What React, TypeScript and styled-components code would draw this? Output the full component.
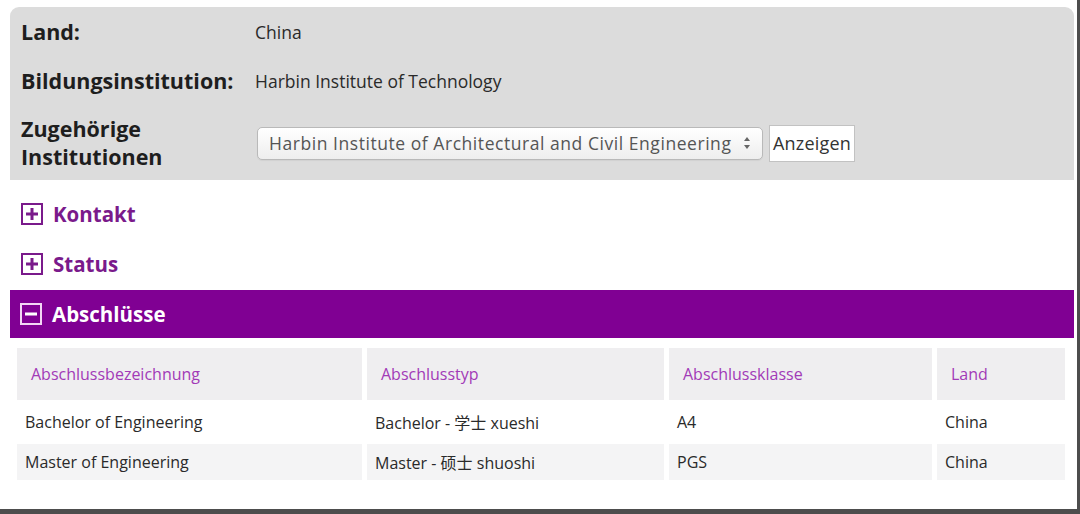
import React from "react";
import styled, { createGlobalStyle } from "styled-components";

const Global = createGlobalStyle`
  html, body { margin: 0; padding: 0; background: #fff; }
  body { font-family: "Open Sans", "Noto Sans CJK SC", sans-serif; }
  * { box-sizing: border-box; }
`;

const Frame = styled.div`
  width: 1080px;
  height: 514px;
  border-right: 3px solid #4d4d4d;
  border-bottom: 5px solid #4d4d4d;
  padding: 7px 3px 0 10px;
  overflow: hidden;
`;

const InfoPanel = styled.section`
  background: #dcdcdc;
  border-radius: 9px 9px 0 0;
  height: 173px;
  display: grid;
  grid-template-columns: 234px 1fr;
  grid-template-rows: 49px 50px 1fr;
  align-items: center;
  padding-left: 11px;
`;

const Label = styled.div`
  font-weight: 700;
  font-size: 21.5px;
  line-height: 28px;
  color: #1e1e1e;
`;

const Value = styled.div`
  font-size: 17.5px;
  color: #2a2a2a;
  display: flex;
  align-items: center;
  gap: 6px;
`;

const SelectBox = styled.div`
  width: 506px;
  height: 33px;
  margin-left: 2px;
  border: 1px solid #b9b9b9;
  border-radius: 5px;
  background: linear-gradient(#ffffff, #eeeeee);
  display: flex;
  align-items: center;
  justify-content: space-between;
  padding: 0 11px 0 11px;
  font-size: 17.5px;
  letter-spacing: 0.55px;
  color: #555;
  box-shadow: 0 1px 1px rgba(0,0,0,0.05);
`;

const Button = styled.button`
  height: 37px;
  padding: 0 3px;
  background: #fff;
  border: 1px solid #c2c2c2;
  font-family: inherit;
  font-size: 18px;
  letter-spacing: 0.2px;
  color: #333;
`;

const SectionHead = styled.div<{ $open?: boolean }>`
  height: 48px;
  margin-top: 2px;
  display: flex;
  align-items: center;
  gap: 10px;
  padding-left: ${p => (p.$open ? "10px" : "11px")};
  background: ${p => (p.$open ? "#800093" : "transparent")};
  color: ${p => (p.$open ? "#fff" : "#7a1a8b")};
  font-weight: 700;
  font-size: 20.5px;
  &:first-of-type { margin-top: 10px; }
`;

const Toggle = styled.span<{ $open?: boolean }>`
  width: 22px;
  height: 22px;
  border: 2px solid ${p => (p.$open ? "#f3d6f5" : "#7a1a8b")};
  display: inline-flex;
  align-items: center;
  justify-content: center;
`;

const Sections = styled.div`
  display: flex;
  flex-direction: column;
`;

const Table = styled.div`
  margin: 10px 8px 0 7px;
  display: grid;
  grid-template-columns: 345px 297px 263px 128px;
  column-gap: 5px;
  row-gap: 2px;
  grid-template-rows: 52px 40px 36px;
`;

const HeadCell = styled.div`
  background: #efeef0;
  color: #a23ab7;
  font-size: 16px;
  display: flex;
  align-items: center;
  padding-left: 14px;
`;

const Cell = styled.div<{ $alt?: boolean }>`
  background: ${p => (p.$alt ? "#f4f4f5" : "#fff")};
  color: #2a2a2a;
  font-size: 16px;
  display: flex;
  align-items: center;
  padding-left: 8px;
`;

const PlusIcon = ({ open }: { open?: boolean }) => (
  <Toggle $open={open}>
    <svg width="12" height="12" viewBox="0 0 12 12">
      <rect x="0" y="4.5" width="12" height="3" fill={open ? "#fff" : "#7a1a8b"} />
      {!open && <rect x="4.5" y="0" width="3" height="12" fill="#7a1a8b" />}
    </svg>
  </Toggle>
);

const Arrows = () => (
  <svg width="8" height="14" viewBox="0 0 8 14">
    <path d="M4 1 L7 5 H1 Z" fill="#666" />
    <path d="M4 13 L7 9 H1 Z" fill="#666" />
  </svg>
);

const rows = [
  ["Bachelor of Engineering", "Bachelor - 学士 xueshi", "A4", "China"],
  ["Master of Engineering", "Master - 硕士 shuoshi", "PGS", "China"],
];

export default function App() {
  return (
    <>
      <Global />
      <Frame>
        <InfoPanel>
          <Label>Land:</Label>
          <Value>China</Value>
          <Label>Bildungsinstitution:</Label>
          <Value>Harbin Institute of Technology</Value>
          <Label>
            Zugehörige
            <br />
            Institutionen
          </Label>
          <Value>
            <SelectBox>
              <span>Harbin Institute of Architectural and Civil Engineering</span>
              <Arrows />
            </SelectBox>
            <Button>Anzeigen</Button>
          </Value>
        </InfoPanel>
        <Sections>
          <SectionHead>
            <PlusIcon />
            Kontakt
          </SectionHead>
          <SectionHead>
            <PlusIcon />
            Status
          </SectionHead>
          <SectionHead $open>
            <PlusIcon open />
            Abschlüsse
          </SectionHead>
        </Sections>
        <Table>
          <HeadCell>Abschlussbezeichnung</HeadCell>
          <HeadCell>Abschlusstyp</HeadCell>
          <HeadCell>Abschlussklasse</HeadCell>
          <HeadCell>Land</HeadCell>
          {rows.map((r, i) =>
            r.map((c, j) => (
              <Cell key={`${i}-${j}`} $alt={i % 2 === 1}>
                {c}
              </Cell>
            ))
          )}
        </Table>
      </Frame>
    </>
  );
}
